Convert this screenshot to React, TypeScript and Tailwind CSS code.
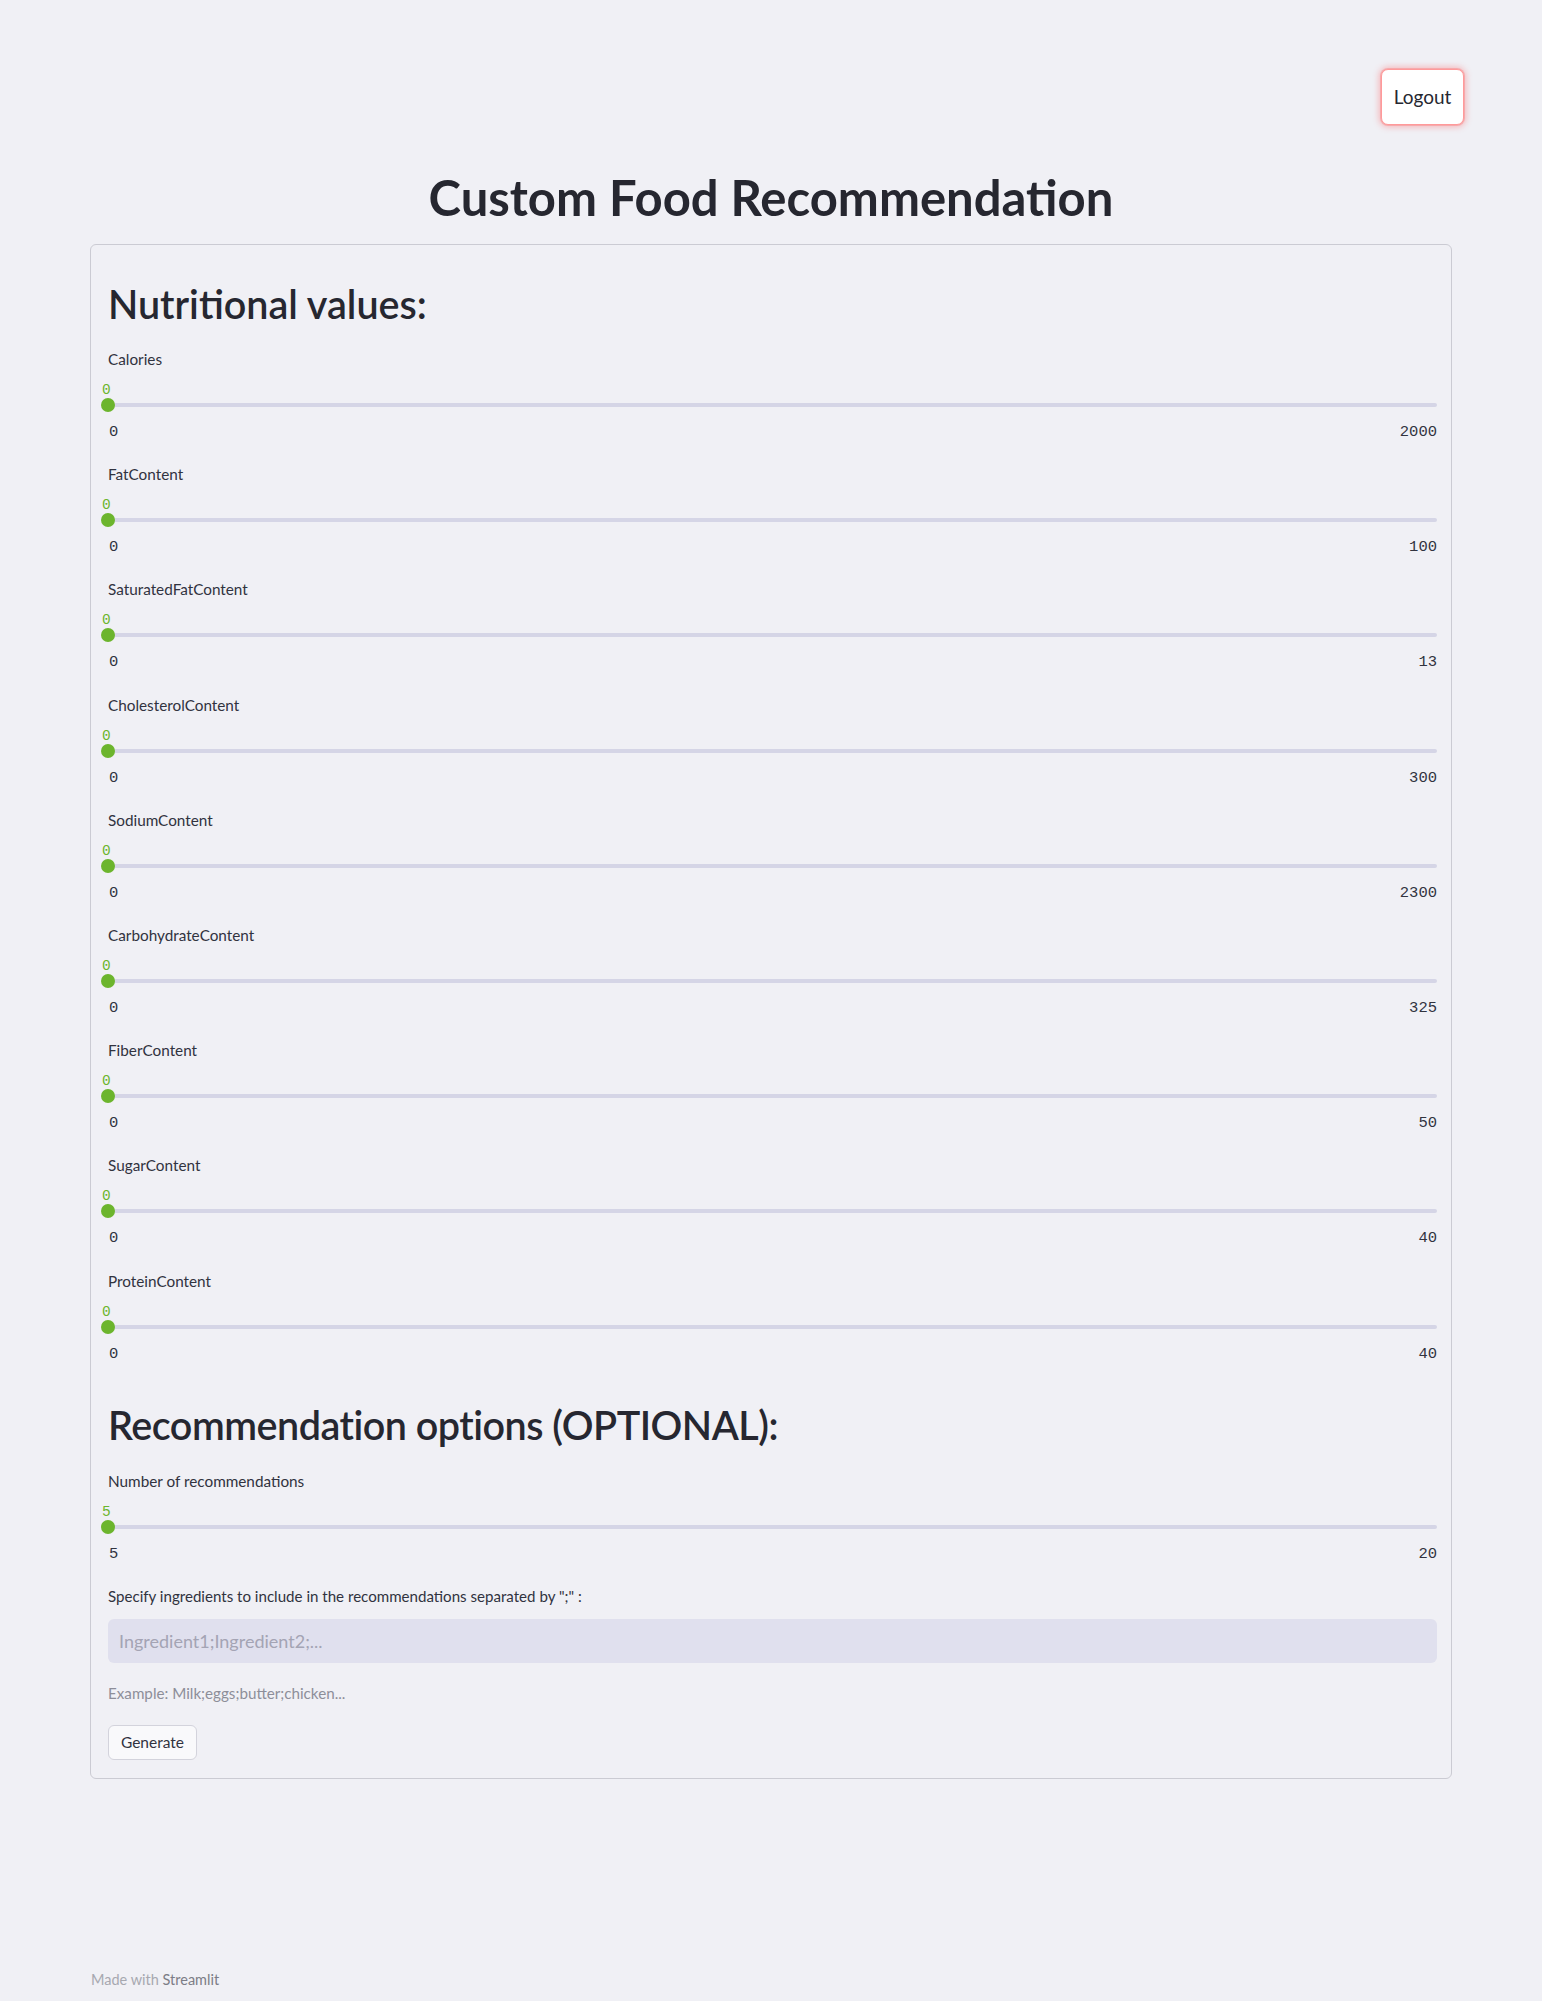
import React from "react";

const sliders = [
  { label: "Calories", min: 0, max: 2000 },
  { label: "FatContent", min: 0, max: 100 },
  { label: "SaturatedFatContent", min: 0, max: 13 },
  { label: "CholesterolContent", min: 0, max: 300 },
  { label: "SodiumContent", min: 0, max: 2300 },
  { label: "CarbohydrateContent", min: 0, max: 325 },
  { label: "FiberContent", min: 0, max: 50 },
  { label: "SugarContent", min: 0, max: 40 },
  { label: "ProteinContent", min: 0, max: 40 },
];

function Slider({ label, min, max, value }: { label: string; min: number; max: number; value: number }) {
  return (
    <div className="relative h-[115.2px]">
      <div className="h-6 leading-6 text-[15.3px] text-[#31333f]">{label}</div>
      {/* value above the thumb */}
      <div className="absolute left-0 right-0 top-[34px] h-[18px]">
        <span className="absolute left-[-6px] top-0 text-[14.5px] leading-[18px] text-[#6cb52d] font-['Liberation_Mono',monospace]">
          {value}
        </span>
      </div>
      <div className="absolute left-0 right-0 top-[56px] h-1 rounded-full bg-[#d5d5e6]">
        <div className="absolute left-[-7px] top-[-5px] h-[14px] w-[14px] rounded-full bg-[#6cb52d]" />
      </div>
      <div className="absolute left-0 right-0 top-[75px] flex justify-between pl-[1px] text-[15.5px] leading-5 text-[#31333f] font-['Liberation_Mono',monospace]">
        <span>{min}</span>
        <span>{max}</span>
      </div>
    </div>
  );
}

export default function App() {
  return (
    <div className="flex min-h-screen flex-col bg-[#f0f0f5] font-['Lato',sans-serif] text-[#262730]">
      <div className="flex justify-end pr-[78px] pt-[69px]">
        <button className="h-[56px] w-[83px] rounded-[7px] border border-[#ff9a9a] bg-white text-[19px] text-[#262730] shadow-[0_0_0_1px_rgba(255,75,75,0.25),0_0_6px_2px_rgba(255,75,75,0.35)]">
          Logout
        </button>
      </div>

      <h1 className="mt-[40px] h-[64px] text-center text-[49px] font-bold leading-[64px] text-[#262730]">
        Custom Food Recommendation
      </h1>

      <div className="mx-[90px] mt-[15px] rounded-[6px] border border-[#cbcbd3] pb-[18px] pl-[17px] pr-[14px] pt-[33px]">
        <h2 className="mb-[17px] h-[52px] text-[39.5px] font-semibold leading-[52px] text-[#262730]">
          Nutritional values:
        </h2>
        {sliders.map((s) => (
          <Slider key={s.label} label={s.label} min={s.min} max={s.max} value={s.min} />
        ))}
        <h2 className="mb-[18px] mt-[15px] h-[52px] text-[39.5px] font-semibold leading-[52px] tracking-[-0.5px] text-[#262730]">
          Recommendation options (OPTIONAL):
        </h2>
        <Slider label="Number of recommendations" min={5} max={20} value={5} />
        <div className="h-6 leading-6 text-[15.1px] text-[#31333f]">
          Specify ingredients to include in the recommendations separated by ";" :
        </div>
        <input
          className="mt-[11px] h-[44px] w-full rounded-[6px] bg-[#e0e0ee] px-[11px] text-[18px] text-[#31333f] outline-none placeholder:text-[#a4a4b4]"
          placeholder="Ingredient1;Ingredient2;..."
        />
        <div className="mt-[18px] h-6 leading-6 text-[15.2px] text-[#8d8e99]">
          Example: Milk;eggs;butter;chicken...
        </div>
        <button className="mt-[20px] h-[35px] w-[89px] rounded-[6px] border border-[#d3d3dc] bg-[#f9f9fb] text-[15.5px] text-[#31333f]">
          Generate
        </button>
      </div>

      <footer className="mt-auto px-[91px] pb-[11px] text-[14.5px] leading-5 text-[#a7a8b0]">
        Made with <span className="text-[#7c7d86]">Streamlit</span>
      </footer>
    </div>
  );
}
